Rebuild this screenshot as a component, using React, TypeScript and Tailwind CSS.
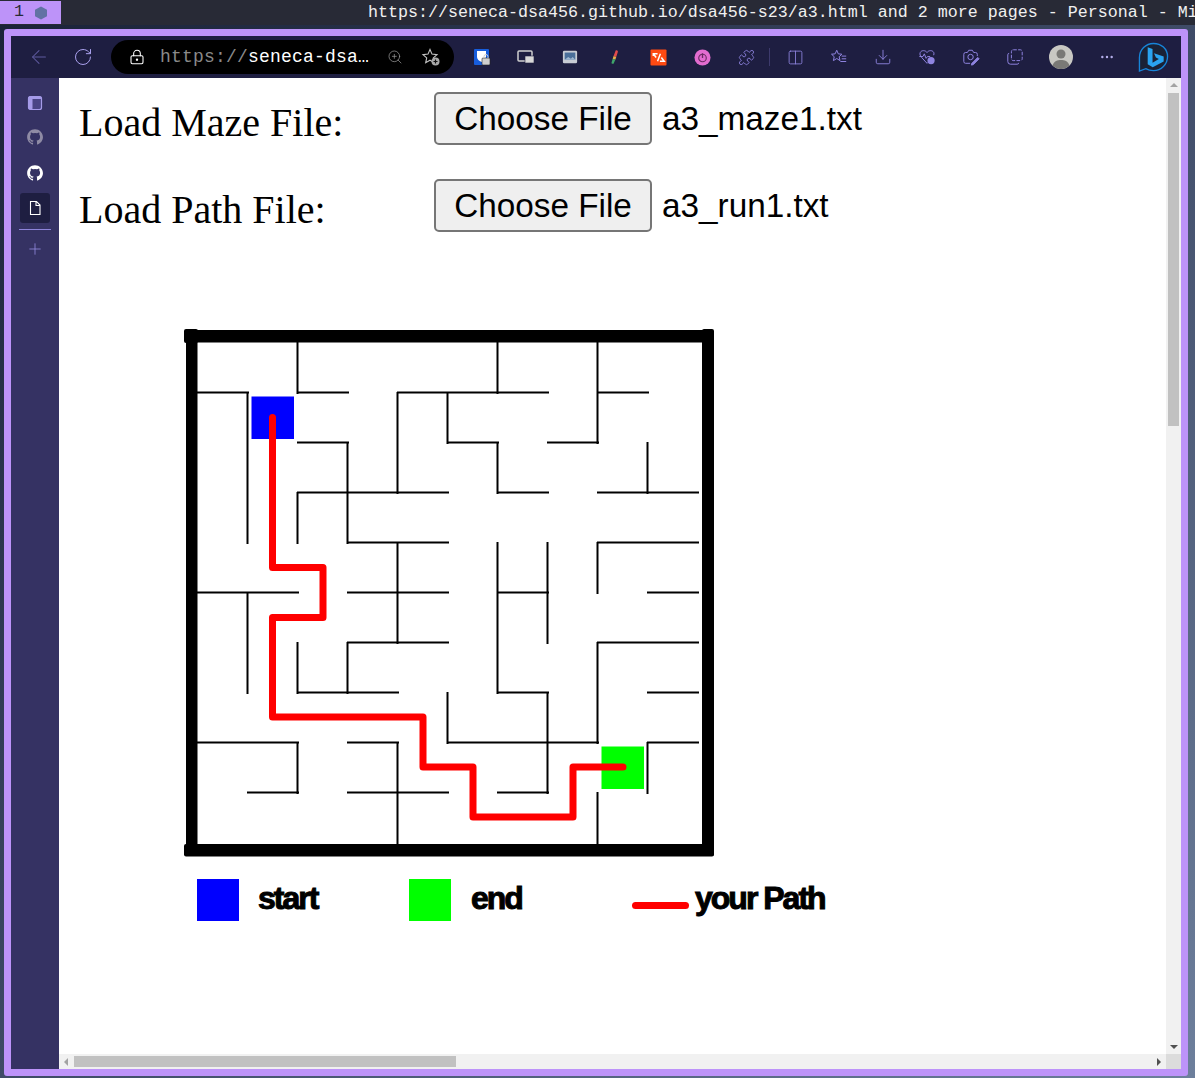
// Browser window showing the maze assignment page

import React from 'react';
import { ArrowLeft, RotateCw, LockKeyhole, ZoomIn, Plus, Puzzle, Columns2, Download, Ellipsis } from 'lucide-react';

// Maze walls on the 50px grid, page coordinates
const wallsH: [number, number, number][] = [
  [393, 198, 248], [393, 298, 348], [393, 398, 548], [393, 598, 648],
  [443, 298, 348], [443, 448, 498], [443, 548, 598],
  [493, 298, 448], [493, 498, 548], [493, 598, 698],
  [543, 348, 448], [543, 598, 698],
  [593, 198, 298], [593, 348, 448], [593, 498, 548], [593, 648, 698],
  [643, 348, 448], [643, 598, 698],
  [693, 298, 398], [693, 498, 548], [693, 648, 698],
  [743, 198, 298], [743, 348, 398], [743, 448, 598], [743, 648, 698],
  [793, 248, 298], [793, 348, 448], [793, 498, 548],
];

const wallsV: [number, number, number][] = [
  [248, 393, 543], [248, 593, 693],
  [298, 343, 393], [298, 493, 543], [298, 643, 693], [298, 743, 793],
  [348, 443, 543], [348, 643, 693],
  [398, 393, 493], [398, 543, 643], [398, 743, 843],
  [448, 393, 443], [448, 693, 743],
  [498, 343, 393], [498, 443, 493], [498, 543, 693],
  [548, 543, 643], [548, 693, 793],
  [598, 343, 443], [598, 543, 593], [598, 643, 743], [598, 793, 843],
  [648, 443, 493], [648, 743, 793],
];

function Maze() {
  return (
    <svg width="540" height="535" viewBox="180 325 540 535" className="block">
      <rect x="251.5" y="396.5" width="42.5" height="42.5" fill="#0000ff" />
      <rect x="601.5" y="746.5" width="42.5" height="42.5" fill="#00ff00" />
      <g stroke="#000" strokeWidth="2" strokeLinecap="square">
        {wallsH.map(([y, x1, x2], i) => (
          <line key={i} x1={x1} x2={x2} y1={y - 0.5} y2={y - 0.5} />
        ))}
        {wallsV.map(([x, y1, y2], i) => (
          <line key={i} x1={x - 0.5} x2={x - 0.5} y1={y1} y2={y2} />
        ))}
      </g>
      {/* Outer walls */}
      <rect x="186" y="330" width="520" height="12.5" />
      <rect x="186" y="330" width="11.5" height="520" />
      <rect x="184" y="329" width="14" height="14" rx="2" />
      <rect x="702" y="329" width="12" height="527" rx="2" />
      <rect x="184" y="844" width="530" height="12.5" rx="2" />
      {/* Path */}
      <path
        d="M272.5 417.5V567.5H323V617.5H272.5V717H423V767H473V817H573V767H623"
        fill="none"
        stroke="#ff0000"
        strokeWidth="7"
        strokeLinecap="round"
        strokeLinejoin="round"
      />
    </svg>
  );
}

function FileRow({ label, file }: { label: string; file: string }) {
  return (
    <div className="flex items-start h-[87px]">
      <div className="w-[355px] pt-[6px] font-['Liberation_Serif',serif] text-[40px] leading-[50px] text-black">{label}</div>
      <div className="h-[53px] w-[218px] flex items-center justify-center bg-[#efefef] border-2 border-[#767676] rounded-[5px] text-[33.3px] text-black font-['Liberation_Sans',sans-serif]">
        Choose File
      </div>
      <span className="ml-[10px] h-[53px] flex items-center text-[33.3px] text-black font-['Liberation_Sans',sans-serif]">{file}</span>
    </div>
  );
}

const Legend = () => (
  <div className="flex items-center h-[42px] ml-[118px] font-['Liberation_Sans',sans-serif] font-bold text-[32px] text-black tracking-[-2px] [-webkit-text-stroke:1px_black]">
    <div className="w-[42px] h-[42px] bg-[#0000ff]" />
    <span className="ml-[19px] w-[151px] -mt-[4px]">start</span>
    <div className="w-[42px] h-[42px] bg-[#00ff00]" />
    <span className="ml-[20px] w-[161px] -mt-[4px]">end</span>
    <div className="w-[57px] h-[7px] mt-[10px] rounded-full bg-[#ff0000]" />
    <span className="ml-[6px] -mt-[4px]">your Path</span>
  </div>
);

// Toolbar icon slot, 44px wide
function Slot({ children }: { children: React.ReactNode }) {
  return <div className="w-[44px] h-full flex items-center justify-center shrink-0 text-[#8f84e0]">{children}</div>;
}

const GithubMark = ({ className }: { className: string }) => (
  <svg viewBox="0 0 24 24" className={className} fill="currentColor">
    <path d="M12 1.5C6.2 1.5 1.5 6.2 1.5 12c0 4.6 3 8.6 7.2 10 .5.1.7-.2.7-.5v-1.8c-2.9.6-3.5-1.4-3.5-1.4-.5-1.2-1.2-1.5-1.2-1.5-1-.7.1-.7.1-.7 1.1.1 1.6 1.1 1.6 1.1 1 1.6 2.5 1.2 3.1.9.1-.7.4-1.2.7-1.4-2.3-.3-4.8-1.2-4.8-5.2 0-1.1.4-2.1 1.1-2.8-.1-.3-.5-1.3.1-2.8 0 0 .9-.3 2.9 1.1a10 10 0 0 1 5.2 0c2-1.4 2.9-1.1 2.9-1.1.6 1.5.2 2.5.1 2.8.7.7 1.1 1.7 1.1 2.8 0 4-2.5 4.9-4.8 5.2.4.3.7 1 .7 1.9v2.9c0 .3.2.6.7.5 4.2-1.4 7.2-5.4 7.2-10C22.5 6.2 17.8 1.5 12 1.5z" />
  </svg>
);

function Toolbar() {
  return (
    <div className="h-[42px] shrink-0 bg-[#1e1e41] flex items-center">
      <div className="w-[6px]" />
      <Slot><ArrowLeft size={22} strokeWidth={1.1} className="text-[#5f5a9f]" /></Slot>
      <Slot><RotateCw size={20} strokeWidth={1.2} className="text-[#a9a0ec]" /></Slot>

      {/* Address bar */}
      <div className="ml-[6px] w-[343px] h-[34px] shrink-0 rounded-[17px] bg-black flex items-center pl-[18px] font-['Liberation_Mono',monospace] text-[18px] tracking-[0.2px]">
        <LockKeyhole size={16} strokeWidth={1.6} className="text-white shrink-0" />
        <span className="ml-[15px] w-[212px] whitespace-nowrap text-[#8a8a8a]">
          https://<span className="text-white">seneca-dsa…</span>
        </span>
        <ZoomIn size={16} strokeWidth={1.1} className="ml-[15px] text-[#9a9a9a] shrink-0" />
        <svg viewBox="0 0 20 20" className="ml-[18px] w-[20px] h-[20px] shrink-0" fill="none" stroke="#c4c4c4" strokeWidth="1.1">
          <path d="M9 2.5l2 4.6 5 .5-3.7 3.3 1 4.8L9 13.2l-4.3 2.5 1-4.8L2 7.6l5-.5z" />
          <circle cx="14.5" cy="14.5" r="4" fill="#a8a8a8" stroke="none" />
          <path d="M14.5 12.5v4M12.5 14.5h4" stroke="#111" strokeWidth="1.2" />
        </svg>
      </div>

      <div className="w-[6px]" />
      {/* Bitwarden */}
      <Slot>
        <svg viewBox="0 0 18 18" className="w-[18px] h-[18px]">
          <rect x="1" y="1" width="15" height="16" rx="1" fill="#175ddc" />
          <path d="M4 3h9v6c0 2-2 4-4.5 5C6 13 4 11 4 9z" fill="#fff" />
          <rect x="9" y="10" width="8" height="7" rx="1" fill="#cfcfcf" stroke="#222" strokeWidth="0.6" />
          <path d="M11 10V8.5a2 2 0 0 1 4 0V10" fill="none" stroke="#cfcfcf" strokeWidth="1" />
        </svg>
      </Slot>
      <Slot>
        <svg viewBox="0 0 18 18" className="w-[18px] h-[18px]">
          <rect x="1" y="3" width="14" height="10" rx="1" fill="none" stroke="#d0d0d0" strokeWidth="1.5" />
          <rect x="8" y="8" width="9" height="7" fill="#d8d8d8" stroke="#1e1e41" strokeWidth="0.6" />
        </svg>
      </Slot>
      <Slot>
        <svg viewBox="0 0 18 18" className="w-[16px] h-[16px]">
          <rect x="1" y="2" width="16" height="14" rx="1.5" fill="#c8ccd4" />
          <rect x="3" y="4" width="12" height="8" fill="#4a6f9a" />
          <path d="M3 12l4-3 3 2 2-2 3 3z" fill="#9fb7d0" />
        </svg>
      </Slot>
      <Slot>
        <svg viewBox="0 0 18 18" className="w-[16px] h-[16px]">
          <path d="M11 1.5c1.5-.5 2.8.5 2.3 2L11.5 9 8.5 8z" fill="#e24b4b" />
          <path d="M8.5 8l3 1-1 3-3-1z" fill="#e7b04a" />
          <path d="M7.5 11l3 1-2 4.5c-1 .5-2.500 0-2.300-1z" fill="#3fa66a" />
        </svg>
      </Slot>
      <Slot>
        <svg viewBox="0 0 18 18" className="w-[17px] h-[17px]">
          <rect x="0.500" y="0.500" width="17" height="17" rx="1" fill="#ff4a12" />
          <path d="M8 5H3.500v2.500M3.500 5l3 4M11 5l-3 8M10.500 13H15l-3-4" fill="none" stroke="#fff" strokeWidth="1.6" />
        </svg>
      </Slot>
      <Slot>
        <svg viewBox="0 0 18 18" className="w-[17px] h-[17px]">
          <circle cx="9" cy="9" r="8.500" fill="#e26ccf" />
          <circle cx="9" cy="9.500" r="4" fill="none" stroke="#6b2a63" strokeWidth="1.2" />
          <path d="M9 4.500v5" stroke="#6b2a63" strokeWidth="1.4" />
        </svg>
      </Slot>
      <Slot><Puzzle size={17} strokeWidth={1.2} /></Slot>
      <div className="w-0 h-[18px] ml-px border-l border-[#3d3a6c]" />
      <div className="w-[3px]" />
      <Slot><Columns2 size={17} strokeWidth={1.2} /></Slot>
      <Slot>
        <svg viewBox="0 0 20 20" className="w-[18px] h-[18px]" fill="none" stroke="currentColor" strokeWidth="1.1">
          <path d="M7.500 2.500l1.700 4 4 .4-3 2.800.9 4.300-3.600-2.300-3.700 2.300.9-4.300-3-2.800 4-.4z" />
          <path d="M13 9h5M13 12h5M11.500 15h6.500" />
        </svg>
      </Slot>
      <Slot><Download size={18} strokeWidth={1.2} /></Slot>
      <Slot>
        <svg viewBox="0 0 20 20" className="w-[18px] h-[18px]" fill="none" stroke="currentColor" strokeWidth="1.1">
          <path d="M10 5C8.500 2.500 4 2 2.500 5c-1 2 .3 4 1.500 5.500L10 17l1-1M10 5c1.500-2.500 6-3 7.500 0 .4 1 .3 2-.1 3" />
          <path d="M1.500 9.500h4l1.500-3 2 5 1.500-2h3" />
          <circle cx="14.500" cy="14" r="4" fill="currentColor" stroke="none" />
        </svg>
      </Slot>
      <Slot>
        <svg viewBox="0 0 20 20" className="w-[18px] h-[18px]" fill="none" stroke="currentColor" strokeWidth="1.1">
          <path d="M9 17H4a2 2 0 0 1-2-2V7a2 2 0 0 1 2-2h2l1.500-2.500h4L13 5h2a2 2 0 0 1 2 2v2" />
          <circle cx="9.500" cy="10" r="3" />
          <path d="M11 17l6.500-6.500 1.500 1.500-6.500 6.500-2 .5z" fill="currentColor" />
        </svg>
      </Slot>
      <Slot>
        <svg viewBox="0 0 20 20" className="w-[18px] h-[18px]" fill="none" stroke="currentColor" strokeWidth="1.1">
          <rect x="6" y="2" width="12" height="12" rx="2" strokeDasharray="4 1.500" />
          <path d="M3.500 6A1.500 1.500 0 0 0 2 7.500V15a3 3 0 0 0 3 3h7.500a1.500 1.500 0 0 0 1.500-1.500" />
        </svg>
      </Slot>

      {/* Profile */}
      <div className="ml-[2px] mr-[2px] w-[44px] h-full flex items-center justify-center shrink-0">
        <svg viewBox="0 0 24 24" className="w-[24px] h-[24px]">
          <circle cx="12" cy="12" r="12" fill="#c9c8c3" />
          <circle cx="12" cy="9" r="4.500" fill="#7a7976" />
          <path d="M3.500 20.500C5 16 8.500 15 12 15s7 1 8.500 5.500A12 12 0 0 1 3.500 20.500z" fill="#7a7976" />
        </svg>
      </div>
      <Slot><Ellipsis size={16} strokeWidth={1.6} className="text-[#b8b2ee]" /></Slot>

      {/* Bing */}
      <div className="ml-[2px] w-[44px] h-full flex items-center justify-center shrink-0">
        <svg viewBox="0 0 32 32" className="w-[31px] h-[31px]">
          <path d="M16 1.500C8 1.500 1.500 8 1.500 16v14l6.500-2.500c2.300 1.400 5 2 8 2 8 0 14.500-6.500 14.500-14.500S24 1.500 16 1.500z" fill="#1a2236" stroke="#1784d8" strokeWidth="1.400" />
          <path d="M10 5.500l5 1.800v14l6.500-3.800-3-1.500-2-4.500 10 3.500v5L15.200 26 10 23z" fill="#2aa3f0" />
        </svg>
      </div>
    </div>
  );
}

function Sidebar() {
  return (
    <div className="w-[48px] shrink-0 bg-[#353263] flex flex-col items-center pt-[17px]">
      <svg viewBox="0 0 16 16" className="w-[16px] h-[16px] mb-[17px]">
        <rect x="1.500" y="1.500" width="13" height="13" rx="2" fill="#4a4585" stroke="#a59be8" strokeWidth="1.200" />
        <rect x="1.500" y="1.500" width="4" height="13" rx="1" fill="#a59be8" />
        <rect x="1.500" y="1.500" width="13" height="2.500" rx="1" fill="#a59be8" />
      </svg>
      <GithubMark className="w-[18px] h-[18px] text-[#8f8ba5] mb-[18px]" />
      <GithubMark className="w-[18px] h-[18px] text-white mb-[11px]" />
      <div className="w-[30px] h-[30px] rounded-[3px] bg-[#1e1e41] flex items-center justify-center">
        <svg viewBox="0 0 16 16" className="w-[16px] h-[16px]" fill="none" stroke="#fff" strokeWidth="1.100">
          <path d="M3.500 1.500h6l3.500 3.500v9.500h-9.500zM9 1.500V5.500h4" />
        </svg>
      </div>
      <div className="mt-[6px] w-[32px] h-px bg-[#8d83d8]" />
      <Plus size={18} strokeWidth={1} className="mt-[10px] text-[#9a90e8]" />
    </div>
  );
}

export default function App() {
  return (
    <div className="w-[1195px] h-[1078px] overflow-hidden bg-gradient-to-br from-[#1a2238] via-[#3e4a66] to-[#6d7f9c] flex flex-col">
      {/* Window manager bar */}
      <div className="h-[25px] shrink-0 bg-[#282a36] flex items-center relative font-['Liberation_Mono',monospace] text-[16.66px] text-[#f0f0f0] whitespace-nowrap overflow-hidden">
        <div className="w-[61px] h-[23px] shrink-0 bg-[#bd93f9] text-[#282a36] flex items-center pl-[14px] gap-[10px]">
          <span>1</span>
          <svg viewBox="0 0 14 14" className="w-[14px] h-[14px]">
            <path d="M7 0.500l6 3.200v6.600l-6 3.200-6-3.200V3.700z" fill="#6272a4" />
          </svg>
        </div>
        <span className="ml-[307px] mt-[2px]">https://seneca-dsa456.github.io/dsa456-s23/a3.html and 2 more pages - Personal - Mi</span>
      </div>

      {/* Browser window */}
      <div className="mt-[4px] ml-[4px] w-[1184px] h-[1047px] rounded-[3px] border-[7px] border-[#bd93f9] flex flex-col overflow-hidden">
        <Toolbar />
        <div className="flex-1 min-h-0 flex">
          <Sidebar />
          <div className="flex-1 min-w-0 bg-white flex flex-col">
            <div className="flex-1 min-h-0 flex">
              {/* Page */}
              <div className="flex-1 min-w-0 pl-[20px] pt-[14px] overflow-hidden">
                <FileRow label="Load Maze File:" file="a3_maze1.txt" />
                <FileRow label="Load Path File:" file="a3_run1.txt" />
                <div className="mt-[59px] ml-[101px]">
                  <Maze />
                </div>
                <div className="mt-[19px]">
                  <Legend />
                </div>
              </div>
              {/* Vertical scrollbar */}
              <div className="w-[15px] shrink-0 bg-[#f1f1f1] flex flex-col items-center">
                <div className="mt-[5px] w-0 h-0 border-x-[4px] border-x-transparent border-b-[4px] border-b-[#a3a3a3]" />
                <div className="mt-[6px] w-[11px] h-[333px] bg-[#c1c1c1]" />
                <div className="mt-auto mb-[5px] w-0 h-0 border-x-[4px] border-x-transparent border-t-[4px] border-t-[#505050]" />
              </div>
            </div>
            {/* Horizontal scrollbar */}
            <div className="h-[15px] shrink-0 bg-[#f1f1f1] flex items-center">
              <div className="ml-[5px] w-0 h-0 border-y-[4px] border-y-transparent border-r-[4px] border-r-[#a3a3a3]" />
              <div className="ml-[6px] w-[382px] h-[11px] bg-[#c1c1c1]" />
              <div className="ml-auto mr-[5px] w-0 h-0 border-y-[4px] border-y-transparent border-l-[4px] border-l-[#505050]" />
              <div className="w-[15px] h-[15px] shrink-0 bg-[#dcdcdc]" />
            </div>
          </div>
        </div>
      </div>
    </div>
  );
}
